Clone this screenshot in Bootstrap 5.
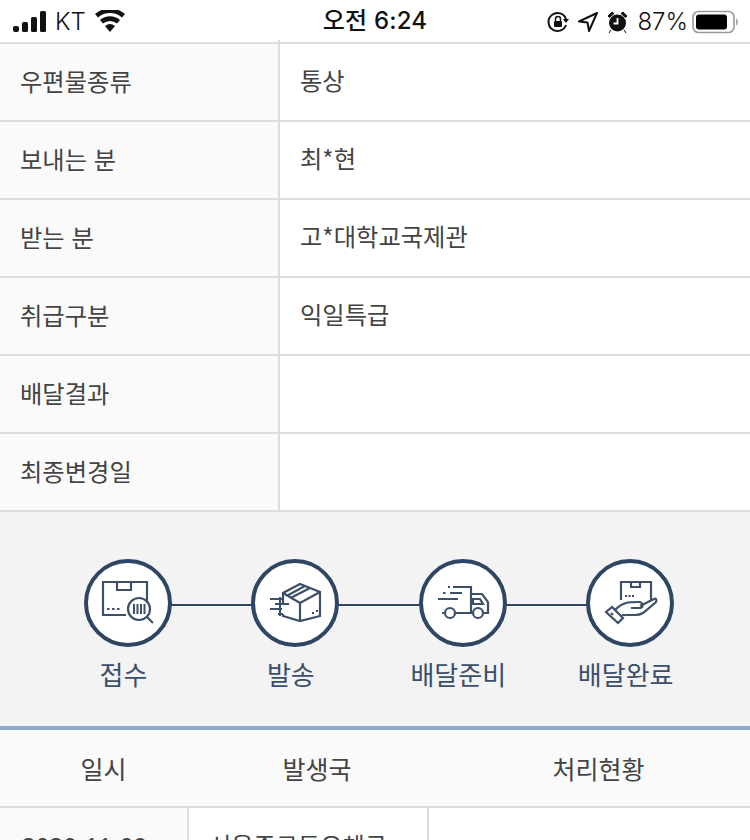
<!DOCTYPE html>
<html lang="ko">
<head>
<meta charset="utf-8">
<title>배달조회</title>
<link href="https://cdn.jsdelivr.net/npm/bootstrap@5.3.0/dist/css/bootstrap.min.css" rel="stylesheet">
<style>
html,body{height:840px;overflow:hidden;background:#fff}
body{font-family:"Noto Sans CJK KR","Noto Sans",sans-serif;color:#444}
.sbar{height:42px;font-family:Inter,"Noto Sans CJK KR",sans-serif;font-size:24px;color:#111;padding:2px 12px 0 13px;position:relative}
.skt{font-weight:300;margin-left:8px}
.spct{font-weight:300}
.sclock{position:absolute;left:0;right:0;top:0;height:42px;font-weight:500;font-size:24px;letter-spacing:.2px}
.sbar svg{display:block}
.sright{gap:9px}
.info-grid{display:grid;grid-template-columns:280px 1fr;border-top:2px solid #ddd;position:relative}
.info-grid::before{content:"";position:absolute;left:278px;top:-4px;width:2px;height:4px;background:#ddd}
.info-head,.info-val{height:78px;border-bottom:2px solid #ddd;padding-left:20px;font-size:24.3px;display:flex;align-items:center}
.info-head{background:#fafafa;border-right:2px solid #ddd;padding-bottom:1px}
.info-val{background:#fff;padding-bottom:3px}
.steps{height:214px;background:#f3f3f3;padding:47px 0 0 44.3px}
.step-item{width:167.4px;position:relative;color:#3b4f6b;font-size:26px;line-height:36px}
.step-item::after{content:"";position:absolute;left:50%;top:45px;width:100%;height:2px;background:#2f4564;z-index:0}
.step-item:last-child::after{display:none}
.step-circle{width:88px;height:88px;border:4.5px solid #2f4564;border-radius:50%;background:#fff;position:relative;z-index:1;margin-bottom:9px}
.step-circle svg{width:80px;height:80px;flex:none;fill:none;stroke:#3d5068;stroke-width:2.2}
.step-name{padding-right:9px}
.log-top{border-top:4px solid #8fa9c9}
.log-row{display:grid;grid-template-columns:189px 240px 1fr}
.log-head{height:78px;background:#fafafa;border-bottom:2px solid #ddd;font-size:25px}
.log-head>div{display:flex;align-items:center;justify-content:center;padding-top:1px}
.log-head>div:first-child{padding-left:18px}
.log-head>div:nth-child(2){padding-left:16px}
.log-head>div:nth-child(3){padding-left:18px}
.log-body{height:60px;font-size:24.2px}
.log-body>div{padding:19px 0 0 24px;border-right:2px solid #ddd;white-space:nowrap;overflow:hidden}
.log-body>div:first-child{background:#fafafa;font-family:"Noto Sans",sans-serif;font-size:24px;padding:20px 0 0 22px}
.log-body>div:nth-child(2){padding-left:20px}
.log-body>div:nth-child(3){border-right:0}
</style>
</head>
<body>
<div class="sbar d-flex align-items-center justify-content-between">
  <div class="d-flex align-items-center">
    <svg width="34" height="22" viewBox="0 0 34 22" fill="#111"><rect x="0" y="15" width="6" height="6" rx="2"/><rect x="9" y="11" width="6" height="10" rx="1.5"/><rect x="18" y="6" width="6" height="15" rx="1.5"/><rect x="27" y="0" width="6" height="21" rx="1.5"/></svg>
    <span class="skt">KT</span>
    <svg class="ms-2" width="32" height="24" viewBox="0 0 32 24" fill="#111"><path d="M16 22l-5-6a8 8 0 0 1 10 0z"/><path d="M9 13.5l-3-3.6a15.5 15.5 0 0 1 20 0l-3 3.6a11 11 0 0 0-14 0z"/><path d="M4 7.5L1 4a23 23 0 0 1 30 0l-3 3.5a18.500 18.500 0 0 0-24 0z"/></svg>
  </div>
  <div class="sclock d-flex align-items-center justify-content-center">오전 6:24</div>
  <div class="d-flex align-items-center sright position-relative">
    <svg width="22" height="22" viewBox="0 0 22 22" fill="none" stroke="#111" stroke-width="2"><path d="M19 14a9 9 0 1 1 0-6"/><path d="M16 8h6l-3 4z" fill="#111" stroke="none"/><rect x="7" y="10" width="8" height="6" rx="1" fill="#111" stroke="none"/><path d="M8.500 10V8a2.500 2.500 0 0 1 5 0v2" stroke-width="1.500"/></svg>
    <svg width="20" height="20" viewBox="0 0 20 20" fill="none" stroke="#111" stroke-width="2" stroke-linejoin="round"><path d="M19 1L1 9.500l8.500 1L11 19z"/></svg>
    <svg width="21" height="22" viewBox="0 0 21 22" fill="#111"><circle cx="10.500" cy="12" r="8.500"/><path d="M1 5l4-4 2 1.500-4.500 4zM20 5l-4-4-2 1.500 4.500 4zM4 19l-2 3M17 19l2 3" stroke="#111" stroke-width="1"/><path d="M10.500 7v5.500H6.500" stroke="#fff" stroke-width="1.800" fill="none"/></svg>
    <div class="d-flex align-items-center gap-1">
      <span class="spct">87%</span>
      <svg width="46" height="24" viewBox="0 0 46 24"><rect x="1" y="1.500" width="41" height="21" rx="5.500" fill="none" stroke="#999" stroke-width="1.600"/><rect x="4" y="4.500" width="31" height="15" rx="3" fill="#000"/><path d="M44 8.500c1.500.5 2 2 2 3.500s-.5 3-2 3.500z" fill="#aaa"/></svg>
    </div>
  </div>
</div>

<div class="info-grid">
  <div class="info-head">우편물종류</div><div class="info-val">통상</div>
  <div class="info-head">보내는 분</div><div class="info-val">최*현</div>
  <div class="info-head">받는 분</div><div class="info-val">고*대학교국제관</div>
  <div class="info-head">취급구분</div><div class="info-val">익일특급</div>
  <div class="info-head">배달결과</div><div class="info-val"></div>
  <div class="info-head">최종변경일</div><div class="info-val"></div>
</div>

<div class="steps d-flex justify-content-start">
  <div class="step-item d-flex flex-column align-items-center">
    <div class="step-circle d-flex align-items-center justify-content-center">
      <svg viewBox="0 0 80 80"><path d="M38 52H15V19h44v21"/><path d="M29 19v8h14v-8"/><circle cx="51" cy="46" r="11"/><path d="M59 54l6 6"/><path d="M46 41v10M49.500 41v10M53 41v10M56.500 41v10" stroke-width="2"/><path d="M19 46h2.500M24 46h2.500M29 46h2.500"/></svg>
    </div>
    <div class="step-name">접수</div>
  </div>
  <div class="step-item d-flex flex-column align-items-center">
    <div class="step-circle d-flex align-items-center justify-content-center">
      <svg viewBox="0 0 80 80"><path d="M28 41V30l17-9 20 8v24L45 58 28 53v-2"/><path d="M28 30l17 10 20-11M45 40v18"/><path d="M36.500 34.500L55 25M32.500 32.500L50 23"/><path d="M15 36h12M20 41h14M15 46h12M23 51h5M25 34v19"  stroke-width="2"/><path d="M57 50h2M61 48h2" stroke-width="2"/></svg>
    </div>
    <div class="step-name">발송</div>
  </div>
  <div class="step-item d-flex flex-column align-items-center">
    <div class="step-circle d-flex align-items-center justify-content-center">
      <svg viewBox="0 0 80 80"><path d="M25 24h2M30 24h18v26"/><path d="M20 30h2.500M27 30h12M15 36h20"/><path d="M19 50h3M32 50h18M48 31h11l6 8v11h-5"/><path d="M50 36h7l3 5H50z"/><circle cx="27" cy="50" r="5"/><circle cx="55" cy="50" r="5"/></svg>
    </div>
    <div class="step-name">배달준비</div>
  </div>
  <div class="step-item d-flex flex-column align-items-center">
    <div class="step-circle d-flex align-items-center justify-content-center">
      <svg viewBox="0 0 80 80"><path d="M31 37V19h30v18"/><path d="M41 19v5h9v-5"/><path d="M35 33h2M38.500 33h2M42 33h2"/><path d="M25 47c3-3 7-6 11-7 3-1 6-1 13-1 4 0 5 6 1 6H41"/><path d="M50 43l14-7c2-1 3 1 2 3L53 50c-3 2-5 2-8 2H32"/><path d="M16 49l6-5 11 11-5 5z"/><path d="M21 50l2 2"/></svg>
    </div>
    <div class="step-name">배달완료</div>
  </div>
</div>

<div class="log-top">
  <div class="log-row log-head">
    <div>일시</div><div>발생국</div><div>처리현황</div>
  </div>
  <div class="log-row log-body">
    <div>2020-11-09</div><div>서울중구동우체국</div><div></div>
  </div>
</div>
<script src="https://cdn.jsdelivr.net/npm/bootstrap@5.3.0/dist/js/bootstrap.bundle.min.js"></script>
</body>
</html>
